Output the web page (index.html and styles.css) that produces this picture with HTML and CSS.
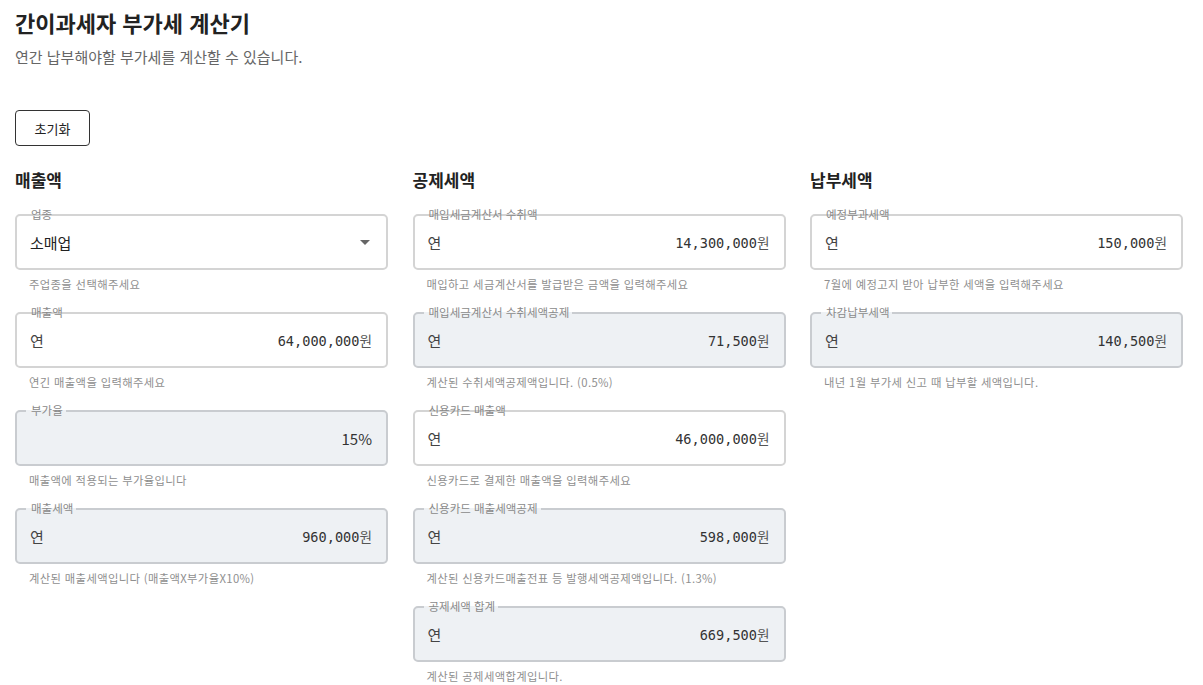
FILE: index.html
```html
<!DOCTYPE html>
<html lang="ko">
<head>
<meta charset="utf-8">
<title>간이과세자 부가세 계산기</title>
<link rel="stylesheet" href="styles.css">
</head>
<body>
<div class="page">
  <h1 class="title">간이과세자 부가세 계산기</h1>
  <p class="subtitle">연간 납부해야할 부가세를 계산할 수 있습니다.</p>
  <button class="reset" type="button">초기화</button>

  <div class="columns">
    <section class="col">
      <h2 class="col-title">매출액</h2>
      <div class="field">
        <div class="box">
          <span class="label">업종</span>
          <span class="select-text">소매업</span>
          <svg class="caret" width="10" height="5" viewBox="0 0 10 5"><path d="M0 0h10L5 5z" fill="#666"/></svg>
        </div>
        <p class="help">주업종을 선택해주세요</p>
      </div>
      <div class="field">
        <div class="box">
          <span class="label">매출액</span>
          <span class="prefix">연</span>
          <span class="value"><span class="num">64,000,000</span><span class="won">원</span></span>
        </div>
        <p class="help">연긴 매출액을 입력해주세요</p>
      </div>
      <div class="field">
        <div class="box disabled">
          <span class="label">부가율</span>
          <span class="prefix"></span>
          <span class="value"><span class="pct">15%</span></span>
        </div>
        <p class="help">매출액에 적용되는 부가율입니다</p>
      </div>
      <div class="field">
        <div class="box disabled">
          <span class="label">매출세액</span>
          <span class="prefix">연</span>
          <span class="value"><span class="num">960,000</span><span class="won">원</span></span>
        </div>
        <p class="help">계산된 매출세액입니다 (매출액X부가율X10%)</p>
      </div>
    </section>

    <section class="col">
      <h2 class="col-title">공제세액</h2>
      <div class="field">
        <div class="box">
          <span class="label">매입세금계산서 수취액</span>
          <span class="prefix">연</span>
          <span class="value"><span class="num">14,300,000</span><span class="won">원</span></span>
        </div>
        <p class="help">매입하고 세금계산서를 발급받은 금액을 입력해주세요</p>
      </div>
      <div class="field">
        <div class="box disabled">
          <span class="label">매입세금계산서 수취세액공제</span>
          <span class="prefix">연</span>
          <span class="value"><span class="num">71,500</span><span class="won">원</span></span>
        </div>
        <p class="help">계산된 수취세액공제액입니다. (0.5%)</p>
      </div>
      <div class="field">
        <div class="box">
          <span class="label">신용카드 매출액</span>
          <span class="prefix">연</span>
          <span class="value"><span class="num">46,000,000</span><span class="won">원</span></span>
        </div>
        <p class="help">신용카드로 결제한 매출액을 입력해주세요</p>
      </div>
      <div class="field">
        <div class="box disabled">
          <span class="label">신용카드 매출세액공제</span>
          <span class="prefix">연</span>
          <span class="value"><span class="num">598,000</span><span class="won">원</span></span>
        </div>
        <p class="help">계산된 신용카드매출전표 등 발행세액공제액입니다. (1.3%)</p>
      </div>
      <div class="field">
        <div class="box disabled">
          <span class="label">공제세액 합계</span>
          <span class="prefix">연</span>
          <span class="value"><span class="num">669,500</span><span class="won">원</span></span>
        </div>
        <p class="help">계산된 공제세액합계입니다.</p>
      </div>
    </section>

    <section class="col">
      <h2 class="col-title">납부세액</h2>
      <div class="field">
        <div class="box">
          <span class="label">예정부과세액</span>
          <span class="prefix">연</span>
          <span class="value"><span class="num">150,000</span><span class="won">원</span></span>
        </div>
        <p class="help">7월에 예정고지 받아 납부한 세액을 입력해주세요</p>
      </div>
      <div class="field">
        <div class="box disabled">
          <span class="label">차감납부세액</span>
          <span class="prefix">연</span>
          <span class="value"><span class="num">140,500</span><span class="won">원</span></span>
        </div>
        <p class="help">내년 1월 부가세 신고 때 납부할 세액입니다.</p>
      </div>
    </section>
  </div>
</div>
</body>
</html>
```

FILE: styles.css
```css
* { box-sizing: border-box; }
html, body { margin: 0; padding: 0; background: #fff; }
body {
  font-family: "Noto Sans CJK KR", "Noto Sans", sans-serif;
  color: #222;
}
.page { padding: 4px 15px 0 15px; }
.title {
  margin: 0;
  font-size: 22px;
  line-height: 36px;
  font-weight: 700;
  color: #222;
}
.subtitle {
  margin: 7px 0 0;
  font-size: 15px;
  line-height: 20px;
  color: #666;
}
.reset {
  margin-top: 43px;
  width: 75px;
  height: 36px;
  border: 1px solid #333;
  border-radius: 4px;
  background: #fff;
  font-family: inherit;
  font-size: 13px;
  color: #222;
  padding: 0;
  display: block;
}
.columns {
  display: grid;
  grid-template-columns: repeat(3, 373px);
  column-gap: 24.5px;
  margin-top: 22px;
}
.col-title {
  margin: 0 0 22px;
  font-size: 17px;
  line-height: 24px;
  font-weight: 700;
  color: #222;
}
.field { margin-bottom: 20px; }
.box {
  position: relative;
  height: 56px;
  border: 2px solid #d4d4d4;
  border-radius: 5px;
  display: flex;
  align-items: center;
  padding: 0 14px 0 13px;
  background: #fff;
}
.box.disabled {
  background: #eef1f4;
  border-color: #c9ccd0;
}
.label {
  position: absolute;
  top: -9px;
  left: 9px;
  padding: 0 3px 0 5px;
  font-size: 11.5px;
  line-height: 14px;
  color: #8a8a8a;
  background: linear-gradient(#fff 0 50%, transparent 50%);
}
.box.disabled .label { background: linear-gradient(#fff 0 50%, #eef1f4 50%); }
.prefix {
  font-size: 15px;
  color: #444;
  flex: 1;
}
.select-text {
  font-size: 15px;
  color: #222;
  flex: 1;
}
.caret { margin-right: 2px; }
.value {
  display: flex;
  align-items: baseline;
  color: #333;
}
.num {
  font-family: "DejaVu Sans Mono", monospace;
  font-size: 13.6px;
  color: #333;
}
.won {
  font-size: 13.6px;
  color: #555;
}
.pct {
  font-size: 15px;
  color: #333;
}
.help {
  margin: 6px 0 0 14px;
  font-size: 11.33px;
  letter-spacing: 0.35px;
  line-height: 16px;
  color: #8f8f8f;
}
```
